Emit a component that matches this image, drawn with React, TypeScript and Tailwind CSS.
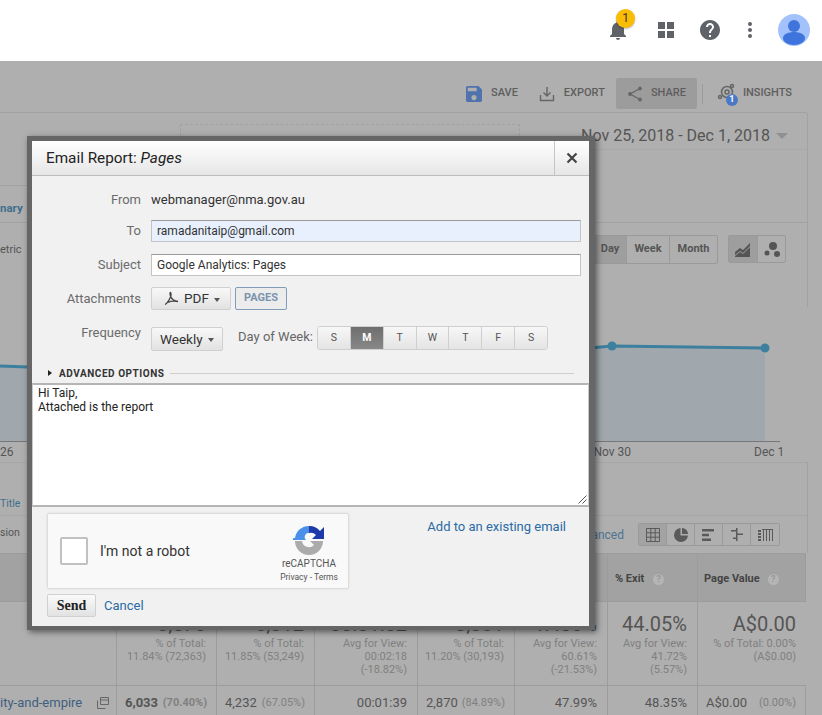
const days = [
  { label: 'S' },
  { label: 'M', active: true },
  { label: 'T' },
  { label: 'W' },
  { label: 'T' },
  { label: 'F' },
  { label: 'S' },
];

const totals = [
  { big: '8,570', lines: ['% of Total:', '11.84% (72,363)'] },
  { big: '6,312', lines: ['% of Total:', '11.85% (53,249)'] },
  { big: '00:01:52', lines: ['Avg for View:', '00:02:18', '(-18.82%)'] },
  { big: '3,381', lines: ['% of Total:', '11.20% (30,193)'] },
  { big: '47.56%', lines: ['Avg for View:', '60.61%', '(-21.53%)'] },
  { big: '44.05%', lines: ['Avg for View:', '41.72%', '(5.57%)'] },
  { big: 'A$0.00', lines: ['% of Total: 0.00%', '(A$0.00)'] },
];

function Field({ label, children, className, labelClass }: { label: string; children: React.ReactNode; className?: string; labelClass?: string }) {
  return (
    <div className={`flex items-center ${className ?? ''}`}>
      <div className={`w-[109px] text-right text-[13px] text-[#6b6b6b] ${labelClass ?? ''}`}>{label}</div>
      <div className="ml-[10px] flex-1 flex items-center">{children}</div>
    </div>
  );
}

function TextBox({ value, autofill }: { value: string; autofill?: boolean }) {
  return (
    <div
      className={`w-[430px] h-[22px] pl-[5px] flex items-center text-[12px] text-[#333] border border-[#c4c4c4] border-t-[#9a9a9a] ${
        autofill ? 'bg-[#e8f0fe]' : 'bg-white'
      }`}
    >
      {value}
    </div>
  );
}

function Caret() {
  return <span className="ml-[5px] mt-[2px] border-x-[3.5px] border-x-transparent border-t-[4px] border-t-[#555]" />;
}

function Modal() {
  return (
    <div className="absolute left-[27px] top-[136px] w-[568px] h-[494px] border-[5px] border-[#666] border-r-[6px] border-b-[4px] bg-[#f1f1f1] shadow-[2px_2px_6px_rgba(0,0,0,0.5)] flex flex-col">
      <div className="h-[35px] shrink-0 flex bg-gradient-to-b from-white to-[#e6e6e6] border-b border-[#bdbdbd]">
        <div className="flex-1 pl-[14px] flex items-center text-[15.3px] text-[#222]">
          Email Report:&nbsp;<i>Pages</i>
        </div>
        <div className="w-[35px] border-l border-[#c4c4c4] flex items-center justify-center">
          <svg width="12" height="12" viewBox="0 0 12 12">
            <path d="M1.5 1.5l9 9M10.5 1.5l-9 9" stroke="#444" strokeWidth="2.2" />
          </svg>
        </div>
      </div>

      <Field label="From" className="mt-[14px] h-[20px]">
        <span className="text-[13px] text-[#333]">webmanager@nma.gov.au</span>
      </Field>
      <Field label="To" className="mt-[10px]">
        <TextBox value="ramadanitaip@gmail.com" autofill />
      </Field>
      <Field label="Subject" className="mt-[12px]">
        <TextBox value="Google Analytics: Pages" />
      </Field>
      <Field label="Attachments" className="mt-[11px]" labelClass="leading-[17px]">
        <div className="w-[80px] h-[23px] flex items-center pl-[12px] text-[13.5px] text-[#333] rounded-[2px] border border-[#d0d0d0] bg-gradient-to-b from-[#f8f8f8] to-[#e2e2e2]">
          <svg width="15" height="15" viewBox="0 0 15 15" fill="none" stroke="#444" strokeWidth="1.3">
            <path d="M1 13.5C3 12.5 5 9.5 6.500 6 7 4.500 7 2 6.500 1.500 6 1 5.800 3 6.500 5 7.500 8 10 10 14 10.500 11 10 7 10 3.500 11.500" />
          </svg>
          <span className="ml-[5px]">PDF</span>
          <Caret />
        </div>
        <div className="ml-[4px] w-[52px] h-[23px] flex items-center justify-center text-[11px] font-bold text-[#7b93ad] rounded-[2px] border border-[#7f9cbb] bg-[#ececec]">
          PAGES
        </div>
      </Field>
      <Field label="Frequency" className="mt-[16px] h-[25px] items-start" labelClass="leading-[14px]">
        <div className="flex items-start w-full">
          <div className="mt-[1px] w-[72px] h-[24px] flex items-center pl-[8px] text-[13.5px] text-[#333] rounded-[2px] border border-[#d0d0d0] bg-gradient-to-b from-[#f8f8f8] to-[#e2e2e2]">
            Weekly
            <Caret />
          </div>
          <span className="ml-[15px] text-[13px] text-[#666] w-[79px] leading-[21px]">Day of Week:</span>
          <div className="flex w-[231px] h-[24px] rounded-[3px] border border-[#cfcfcf] overflow-hidden">
            {days.map((d, i) => (
              <div
                key={i}
                className={`flex-1 flex items-center justify-center text-[10.5px] border-r border-[#cfcfcf] last:border-r-0 ${
                  d.active
                    ? 'font-bold text-white bg-gradient-to-b from-[#6e6e6e] to-[#888]'
                    : 'text-[#555] bg-gradient-to-b from-[#f7f7f7] to-[#e4e4e4]'
                }`}
              >
                {d.label}
              </div>
            ))}
          </div>
        </div>
      </Field>

      <div className="mt-[15px] flex items-center h-[14px] pl-[16px] pr-[15px]">
        <span className="border-y-[3.5px] border-y-transparent border-l-[4px] border-l-[#222]" />
        <span className="ml-[7px] text-[10px] font-bold tracking-[0.55px] text-[#333]">ADVANCED OPTIONS</span>
        <span className="ml-[5px] flex-1 h-px bg-[#cfcfcf]" />
      </div>

      <div className="relative mt-[3px] h-[124px] shrink-0 bg-white border-2 border-[#b5b5b5] border-x border-x-[#c9c9c9] pl-[5px] pt-[1px] text-[12px] leading-[14px] text-[#222]">
        <div>Hi Taip,</div>
        <div>Attached is the report</div>
        <svg className="absolute right-[1px] bottom-[1px]" width="10" height="10" viewBox="0 0 10 10">
          <path d="M9.5 1.500l-8 8M9.500 5.500l-4 4" stroke="#555" strokeWidth="1" />
        </svg>
      </div>

      <div className="flex items-start pl-[15px] pr-[23px] pt-[6px]">
        <div className="w-[302px] h-[76px] flex items-center bg-[#f9f9f9] border border-[#dcdcdc] rounded-[2px] shadow-[0_0_3px_rgba(0,0,0,0.08)]">
          <div className="ml-[12px] w-[28px] h-[28px] bg-white border-2 border-[#c1c1c1] rounded-[2px]" />
          <span className="ml-[12px] text-[14px] text-[#333]">I'm not a robot</span>
          <div className="ml-auto w-[70px] mr-[4px] flex flex-col items-center">
            <svg width="32" height="32" viewBox="0 0 32 32" className="mt-[3px]">
              <path d="M16 3A14 14 0 0 0 2 15L0 15V17H13A4 4 0 0 1 16 10Z" fill="#4a90e8" />
              <path d="M16 3A14 14 0 0 1 27 8L31 4V16H19L23 12A7 7 0 0 0 16 10Z" fill="#1c3aa9" />
              <path d="M30 18A14 14 0 0 1 2 18H9A7 7 0 0 0 21 22L17 18Z" fill="#ababab" />
            </svg>
            <span className="mt-[3px] text-[10px] leading-[12px] text-[#555]">reCAPTCHA</span>
            <span className="mt-[2px] text-[8.5px] leading-[10px] text-[#555]">Privacy - Terms</span>
          </div>
        </div>
        <a className="ml-auto mt-[4px] text-[13px] text-[#2a6aa5]">Add to an existing email</a>
      </div>

      <div className="flex items-center pl-[15px] mt-[5px]">
        <div className="w-[49px] h-[23px] flex items-center justify-center font-['Liberation_Serif',serif] font-bold text-[14px] text-[#222] rounded-[2px] border border-[#d0d0d0] bg-gradient-to-b from-[#fafafa] to-[#e2e2e2]">
          Send
        </div>
        <a className="ml-[8px] text-[13px] text-[#2a6aa5]">Cancel</a>
      </div>
    </div>
  );
}

function TopBar() {
  return (
    <div className="h-[61px] bg-white flex items-center justify-end pr-[12px] pb-[2px]">
      <div className="relative mr-[27px]">
        <svg width="24" height="24" viewBox="0 0 24 24" fill="#5f6368">
          <path d="M12 22c1.100 0 2-.9 2-2h-4c0 1.100.9 2 2 2zm6-6v-5c0-3.070-1.630-5.640-4.500-6.320V4c0-.83-.67-1.500-1.500-1.500s-1.500.67-1.500 1.500v.68C7.640 5.360 6 7.920 6 11v5l-2 2v1h16v-1l-2-2z" />
        </svg>
        <span className="absolute left-[10px] top-[-9px] w-[19px] h-[19px] rounded-full bg-[#fbbc04] flex items-center justify-center text-[12px] text-[#333] shadow-[0_1px_2px_rgba(0,0,0,0.3)]">
          1
        </span>
      </div>
      <svg className="mr-[23px]" width="18" height="18" viewBox="0 0 18 18" fill="#5f6368">
        <path d="M1 1h7v7H1zM10 1h7v7h-7zM1 10h7v7H1zM10 10h7v7h-7z" />
      </svg>
      <svg className="mr-[25px]" width="24" height="24" viewBox="0 0 24 24" fill="#5f6368">
        <path d="M12 2C6.480 2 2 6.480 2 12s4.480 10 10 10 10-4.480 10-10S17.520 2 12 2zm1 17h-2v-2h2v2zm2.070-7.750l-.9.92C13.450 12.900 13 13.500 13 15h-2v-.5c0-1.100.45-2.100 1.170-2.830l1.240-1.260c.37-.36.59-.86.59-1.410 0-1.100-.9-2-2-2s-2 .9-2 2H8c0-2.210 1.790-4 4-4s4 1.790 4 4c0 .88-.36 1.680-.93 2.250z" />
      </svg>
      <svg className="mr-[25px]" width="6" height="18" viewBox="0 0 6 18" fill="#5f6368">
        <circle cx="3" cy="3" r="2" />
        <circle cx="3" cy="9" r="2" />
        <circle cx="3" cy="15" r="2" />
      </svg>
      <svg width="32" height="32" viewBox="0 0 32 32">
        <circle cx="16" cy="16" r="16" fill="#a3c2fb" />
        <circle cx="16" cy="12" r="6" fill="#3f74dc" />
        <path d="M5 24c0-4 6-6 11-6s11 2 11 6c0 4-5 7-11 7S5 28 5 24z" fill="#3f74dc" />
      </svg>
    </div>
  );
}

function Toolbar() {
  return (
    <div className="h-[52px] mr-[15px] border-b border-[#a2a2a2] flex items-center justify-end pr-[15px] pt-[14px] text-[11px] font-medium text-[#5e5e5e]">
      <svg width="16" height="16" viewBox="3 3 18 18" fill="#4f73ad">
        <path d="M17 3H5c-1.110 0-2 .9-2 2v14c0 1.100.89 2 2 2h14c1.100 0 2-.9 2-2V7l-4-4zm-5 16c-1.660 0-3-1.340-3-3s1.340-3 3-3 3 1.340 3 3-1.340 3-3 3zm3-10H5V5h10v4z" />
      </svg>
      <span className="ml-[9px]">SAVE</span>
      <svg className="ml-[21px]" width="16" height="16" viewBox="0 0 16 16" fill="none" stroke="#666" strokeWidth="1.4">
        <path d="M8 1v9M4.500 6.500L8 10l3.500-3.500M1.500 9v5.500h13V9" />
      </svg>
      <span className="ml-[9px]">EXPORT</span>
      <div className="ml-[11px] w-[81px] h-[31px] rounded-[2px] bg-[#9c9c9c] flex items-center pl-[11px]">
        <svg width="16" height="16" viewBox="0 0 16 16" fill="#666" stroke="#666">
          <path d="M13 2.500L3 8l10 5.500" fill="none" strokeWidth="1.300" />
          <circle cx="13" cy="2.500" r="1.500" />
          <circle cx="3" cy="8" r="1.500" />
          <circle cx="13" cy="13.500" r="1.500" />
        </svg>
        <span className="ml-[8px]">SHARE</span>
      </div>
      <span className="ml-[5px] w-px h-[20px] bg-[#9c9c9c]" />
      <div className="relative ml-[14px] w-[21px] h-[21px]">
        <svg width="20" height="20" viewBox="0 0 20 20" fill="none" stroke="#666" strokeWidth="1.500">
          <circle cx="10" cy="9" r="5.500" />
          <circle cx="10" cy="9" r="2" />
          <circle cx="3" cy="14" r="1.500" />
          <circle cx="15" cy="3" r="1.500" />
        </svg>
        <span className="absolute left-[9px] top-[11px] w-[12px] h-[12px] rounded-full bg-[#4b78c4] flex items-center justify-center text-[9px] font-bold text-white">
          1
        </span>
      </div>
      <span className="ml-[5px]">INSIGHTS</span>
    </div>
  );
}

function ViewIcons() {
  const stroke = '#5a5a5a';
  return (
    <div className="flex h-[23px] rounded-[2px] border border-[#9a9a9a]">
      <div className="w-[28px] bg-[#a3a3a3] border-r border-[#9a9a9a] flex items-center justify-center">
        <svg width="14" height="14" viewBox="0 0 14 14" fill="none" stroke={stroke}>
          <path d="M.5.5h13v13H.5zM.5 4.800h13M.5 9.200h13M4.800.5v13M9.200.5v13" />
        </svg>
      </div>
      <div className="w-[28px] border-r border-[#9a9a9a] flex items-center justify-center">
        <svg width="14" height="14" viewBox="0 0 14 14" fill={stroke}>
          <path d="M6.500 0v7.500H14A7 7 0 1 1 6.500 0z" />
          <path d="M8 0a6 6 0 0 1 6 6H8z" />
        </svg>
      </div>
      <div className="w-[28px] border-r border-[#9a9a9a] flex items-center justify-center">
        <svg width="13" height="12" viewBox="0 0 13 12" fill={stroke}>
          <path d="M0 0h12v2.500H0zM0 4.700h7v2.500H0zM0 9.500h9V12H0z" />
        </svg>
      </div>
      <div className="w-[28px] border-r border-[#9a9a9a] flex items-center justify-center">
        <svg width="13" height="13" viewBox="0 0 13 13" fill={stroke}>
          <path d="M6 0h1.500v13H6zM1 2h5v1.500H1zM7.500 5.500H13V7H7.500zM3 9.500h3V11H3z" />
        </svg>
      </div>
      <div className="w-[28px] flex items-center justify-center">
        <svg width="15" height="12" viewBox="0 0 15 12" fill={stroke}>
          <path d="M0 1h3v2H0zM0 4h3v2H0zM0 7h3v2H0zM0 10h3v2H0zM4 0h11v1H4zM5 1h1v11H5zM8 1h1v11H8zM11 1h1v11h-1zM14 1h1v11h-1z" />
        </svg>
      </div>
    </div>
  );
}

function Chart() {
  return (
    <svg className="block" width="822" height="135" viewBox="0 0 822 135">
      <path d="M0 59L28 60V135H0Z" fill="#a0a8ad" />
      <path d="M590 41L612 39L765 41V135H590Z" fill="#a0a8ad" />
      <path d="M0 59L28 60" stroke="#3d7f9e" strokeWidth="3" fill="none" />
      <path d="M590 41L612 39L765 41" stroke="#3d7f9e" strokeWidth="3" fill="none" />
      <circle cx="612" cy="39" r="4.500" fill="#3d7f9e" />
      <circle cx="765" cy="41" r="4.500" fill="#3d7f9e" />
      <path d="M0 134.500H780" stroke="#777" />
    </svg>
  );
}

function RowCell({ value, pct, bold, last }: { value: string; pct: string; bold?: boolean; last?: boolean }) {
  return (
    <div className={`h-[30px] border-l border-[#9c9c9c] flex items-center justify-between pl-[8px] pr-[9px] pt-[4px] text-[13px] ${last ? 'border-r' : ''}`}>
      <span className={bold ? 'font-bold' : ''}>{value}</span>
      <span className={`text-[11px] text-[#808080] ${bold ? 'font-bold' : ''}`}>{pct}</span>
    </div>
  );
}

function PlainCell({ value }: { value: string }) {
  return <div className="h-[30px] border-l border-[#9c9c9c] flex items-center justify-end pr-[10px] pt-[4px] text-[13px]">{value}</div>;
}

function Table() {
  return (
    <div className="grid grid-cols-[116px_100px_98px_103px_97px_93px_90px_109px] w-[806px] text-[#555]">
      <div className="col-span-6 h-[49px] border-y border-[#9c9c9c] bg-[#a2a2a2]" />
      <div className="h-[49px] border-y border-l border-[#9c9c9c] bg-[#a2a2a2] flex items-center pl-[7px] pt-[4px] text-[11px] font-bold text-[#444]">
        % Exit
        <span className="ml-[9px] w-[11px] h-[11px] rounded-full bg-[#b5b5b5] text-[9px] text-[#999] flex items-center justify-center">?</span>
      </div>
      <div className="h-[49px] border-y border-x border-[#9c9c9c] bg-[#a2a2a2] flex items-center pl-[6px] pt-[4px] text-[11px] font-bold text-[#444]">
        Page Value
        <span className="ml-[8px] w-[11px] h-[11px] rounded-full bg-[#b5b5b5] text-[9px] text-[#999] flex items-center justify-center">?</span>
      </div>

      <div className="h-[84px] border-b border-[#9c9c9c]" />
      {totals.map(t => (
        <div key={t.big} className="h-[84px] border-b border-l border-[#9c9c9c] last:border-r pr-[10px] pt-[10px] text-right whitespace-nowrap">
          <div className="text-[20px] leading-[25px] text-[#555]">{t.big}</div>
          {t.lines.map(l => (
            <div key={l} className="text-[11px] leading-[13px] text-[#808080]">{l}</div>
          ))}
        </div>
      ))}

      <div className="h-[30px] flex items-center pt-[4px] text-[13px] text-[#3f6080]">
        <span>ity-and-empire</span>
        <svg className="ml-[15px]" width="12" height="12" viewBox="0 0 12 12" fill="none" stroke="#666">
          <path d="M3.500.5h8v7h-8zM3.500 3h8M.5 3.500v8h8" />
        </svg>
      </div>
      <RowCell value="6,033" pct="(70.40%)" bold />
      <RowCell value="4,232" pct="(67.05%)" />
      <PlainCell value="00:01:39" />
      <RowCell value="2,870" pct="(84.89%)" />
      <PlainCell value="47.99%" />
      <PlainCell value="48.35%" />
      <RowCell value="A$0.00" pct="(0.00%)" last />
    </div>
  );
}

export default function App() {
  return (
    <div className="relative w-[822px] h-[715px] overflow-hidden bg-[#afafaf] font-[Roboto,sans-serif]">
      <TopBar />
      <Toolbar />

      <div className="h-[110px] flex border-b border-r border-[#a2a2a2] mr-[14px]">
        <div className="w-[27px] mt-[72px] h-[37px] border-t border-[#a2a2a2] flex items-center text-[11.5px] font-bold text-[#3f6f8c] pt-[10px]">
          <span>nary</span>
        </div>
        <div className="ml-[153px] mt-[11px] w-[340px] h-[12px] border border-b-0 border-dashed border-[#a2a2a2]" />
        <div className="ml-auto mt-[10px] w-[226px] h-[27px] border-b border-[#a8a8a8] flex items-center text-[16px] whitespace-nowrap text-[#555]">
          Nov 25, 2018 - Dec 1, 2018
          <span className="ml-[6px] border-x-[6px] border-x-transparent border-t-[6px] border-t-[#909090]" />
        </div>
      </div>

      <div className="h-[84px] mr-[14px] border-r border-[#a2a2a2] flex justify-between">
        <span className="mt-[19px] h-[16px] text-[11px] text-[#555]">etric</span>
        <div className="flex items-start mt-[12px] mr-[21px]">
          <div className="flex h-[29px] rounded-[2px] border border-[#9a9a9a] text-[11px] font-bold text-[#555]">
            <div className="w-[33px] bg-[#9e9e9e] border-r border-[#9a9a9a] flex items-center justify-center">Day</div>
            <div className="w-[43px] border-r border-[#9a9a9a] flex items-center justify-center">Week</div>
            <div className="w-[47px] flex items-center justify-center">Month</div>
          </div>
          <div className="flex h-[28px] ml-[10px] rounded-[2px] border border-[#9a9a9a]">
            <div className="w-[29px] bg-[#9e9e9e] border-r border-[#9a9a9a] flex items-center justify-center">
              <svg width="16" height="15" viewBox="0 0 16 15" fill="#555">
                <path d="M0 10l5-4 3 2 7-7v3L8 11 5 9l-5 4zM0 15v-1l5-4 3 2 7-7v10z" />
              </svg>
            </div>
            <div className="w-[27px] flex items-center justify-center">
              <svg width="16" height="15" viewBox="0 0 16 15" fill="#555">
                <circle cx="9" cy="4" r="4" />
                <circle cx="3" cy="11" r="2.500" />
                <circle cx="13" cy="12" r="3" />
              </svg>
            </div>
          </div>
        </div>
      </div>

      <Chart />

      <div className="h-[20px] flex items-center text-[12px] text-[#555]">
        <span>26</span>
        <span className="ml-[580px]">Nov 30</span>
        <span className="ml-[123px]">Dec 1</span>
      </div>

      <div className="h-[91px] mr-[14px] border-r border-[#a2a2a2] flex flex-col">
        <div className="h-[53px] border-t border-[#a6a6a6] flex items-end pb-[3px] text-[10.5px] text-[#3f6f8c]">
          <span>Title</span>
        </div>
        <div className="flex-1 border-t border-[#a6a6a6] flex justify-between items-start text-[10.5px] text-[#555]">
          <span className="mt-[9px]">sion</span>
          <div className="flex items-center mt-[7px] mr-[27px]">
            <span className="mr-[14px] text-[12px] text-[#4e7391]">anced</span>
            <ViewIcons />
          </div>
        </div>
      </div>

      <Table />
      <Modal />
    </div>
  );
}
